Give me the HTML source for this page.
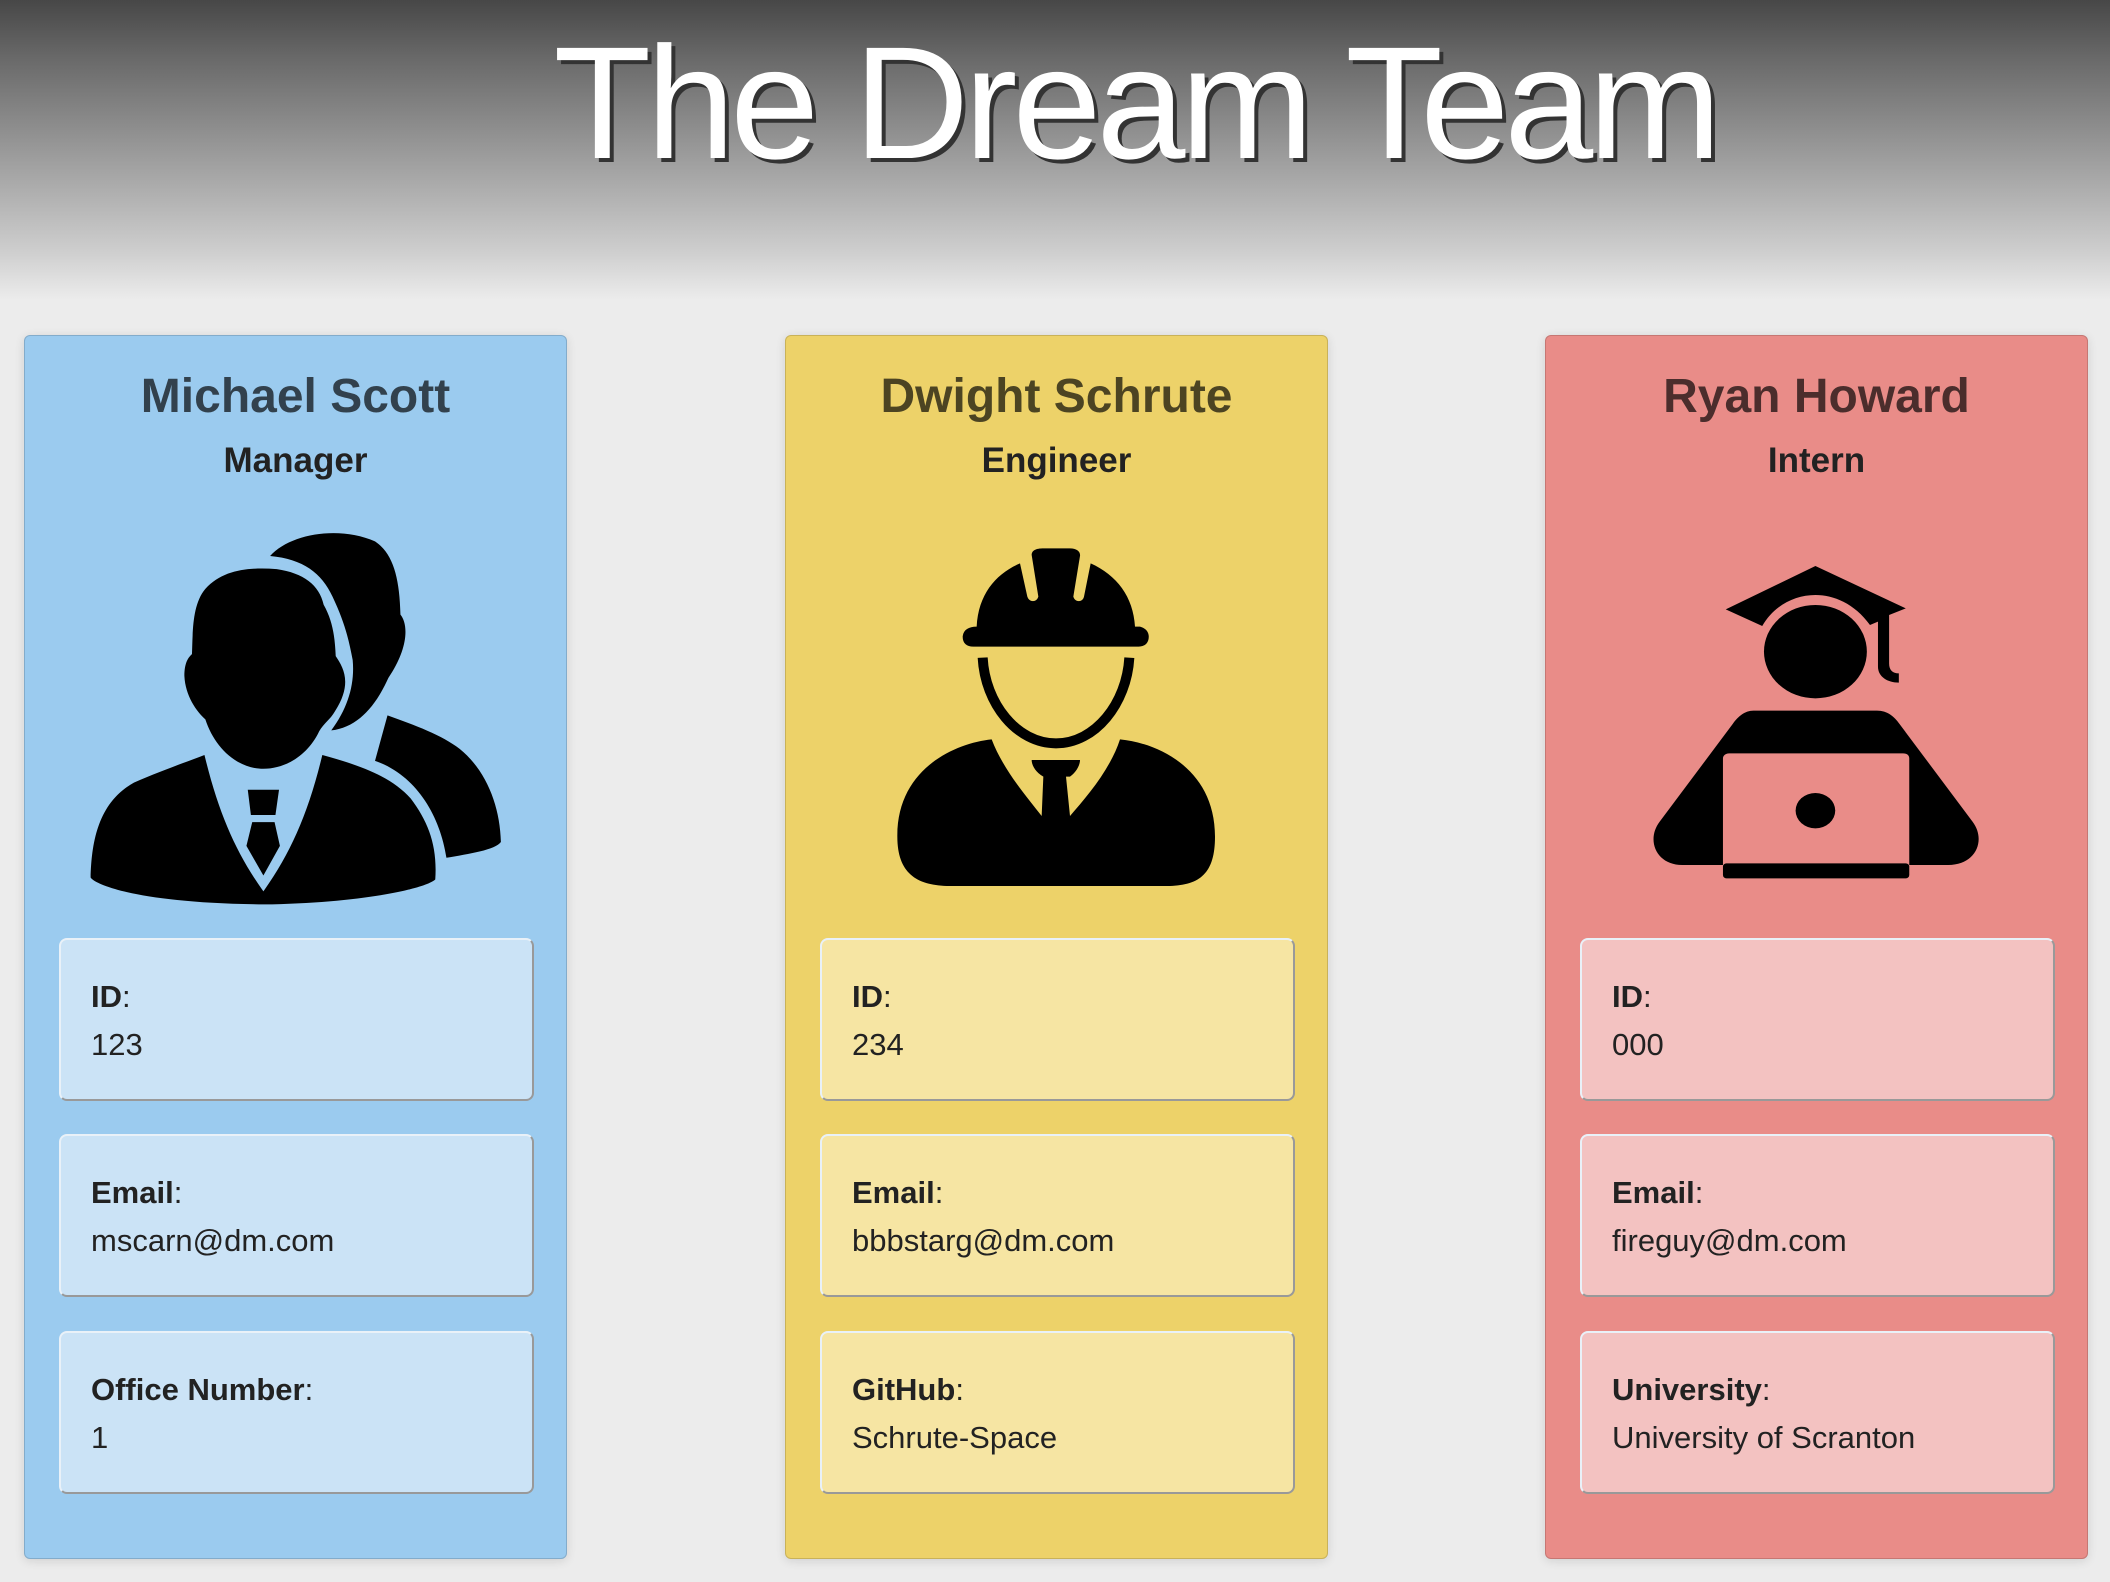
<!DOCTYPE html>
<html><head><meta charset="utf-8"><style>
*{margin:0;padding:0;box-sizing:border-box}
html,body{width:2110px;height:1582px;overflow:hidden;background:#ececec;font-family:"Liberation Sans",Arial,sans-serif}
.hdr{position:absolute;left:0;top:0;width:2110px;height:300px;background:linear-gradient(#474747 0px,#6a6a6a 60px,#9e9e9e 160px,#cdcdcd 250px,#ececec 300px)}
.title{position:absolute;left:0;width:2110px;top:11px;text-align:center;color:#fff;font-size:160px;letter-spacing:-5px;line-height:184px;text-shadow:4px 4px 0 #333;padding-left:160px}
.card{position:absolute;top:335px;width:543px;height:1224px;border-radius:6px;border:1px solid rgba(0,0,0,.15);box-shadow:0 2px 10px rgba(0,0,0,.12)}
.nm{position:absolute;left:0;width:100%;top:33px;text-align:center;font-size:48px;font-weight:bold;color:rgba(0,0,0,.68);line-height:56px}
.rl{position:absolute;left:0;width:100%;top:105px;text-align:center;font-size:35px;font-weight:bold;color:#222;line-height:40px}
.box{position:absolute;left:34px;width:475px;height:163px;border-radius:8px;border:2px solid;border-color:#e9f1f8 #999 #999 #e9f1f8;padding:33px 0 0 30px;font-size:31px;color:#222;line-height:48px}
.box b{font-weight:bold}
.b1{top:602px}.b2{top:798px}.b3{top:995px}
svg{position:absolute}
</style></head><body>
<div class="hdr"></div>
<div class="title">The Dream Team</div>

<div class="card" style="left:24px;background:#9bcbef">
<div class="nm">Michael Scott</div><div class="rl">Manager</div>
<div class="box b1" style="background:#cbe3f6"><b>ID</b>:<br>123</div>
<div class="box b2" style="background:#cbe3f6"><b>Email</b>:<br>mscarn@dm.com</div>
<div class="box b3" style="background:#cbe3f6"><b>Office Number</b>:<br>1</div>
</div>

<div class="card" style="left:785px;background:#edd269">
<div class="nm">Dwight Schrute</div><div class="rl">Engineer</div>
<div class="box b1" style="background:#f6e5a3"><b>ID</b>:<br>234</div>
<div class="box b2" style="background:#f6e5a3"><b>Email</b>:<br>bbbstarg@dm.com</div>
<div class="box b3" style="background:#f6e5a3"><b>GitHub</b>:<br>Schrute-Space</div>
</div>

<div class="card" style="left:1545px;background:#e98c88">
<div class="nm">Ryan Howard</div><div class="rl">Intern</div>
<div class="box b1" style="background:#f3c2c1"><b>ID</b>:<br>000</div>
<div class="box b2" style="background:#f3c2c1"><b>Email</b>:<br>fireguy@dm.com</div>
<div class="box b3" style="background:#f3c2c1"><b>University</b>:<br>University of Scranton</div>
</div>

<svg style="left:0;top:320px" width="700" height="620" viewBox="0 0 1568 1568" preserveAspectRatio="none">
<path fill="#000" d="M605,597 C650,540 760,520 840,560 C880,590 895,650 897,745 C915,770 915,830 870,905 C840,980 800,1030 742,1038 C780,980 795,920 790,860 C780,800 770,760 745,700 C720,640 680,605 605,597Z"/>
<path fill="#000" d="M868,1000 C930,1025 990,1050 1030,1085 C1090,1140 1120,1230 1122,1320 C1110,1340 1050,1350 1000,1360 C985,1250 930,1150 840,1115 Z"/>
<path fill="#000" d="M430,845 C432,790 430,720 460,680 C500,630 560,625 620,630 C680,640 715,670 725,720 C745,760 750,800 752,850 C770,880 790,920 750,990 C740,1010 725,1020 715,1040 C690,1100 640,1135 590,1135 C530,1135 480,1080 460,1010 C440,990 415,950 413,900 C413,870 420,855 430,845Z"/>
<path fill="#000" d="M458,1100 C400,1125 350,1145 300,1170 C220,1220 205,1320 203,1410 C210,1425 300,1475 590,1478 C800,1475 950,1440 975,1415 C980,1330 960,1270 920,1210 C880,1160 820,1130 722,1100 C690,1250 650,1350 590,1445 C530,1350 490,1250 458,1100Z"/>
<path fill="#000" d="M555,1188 L625,1188 L617,1252 L562,1252Z M565,1270 L615,1270 L627,1330 L590,1405 L552,1330Z"/>
</svg>

<svg style="left:870px;top:530px" width="375" height="375" viewBox="0 0 1125 1125">
<path fill="#000" d="M320,290 C325,190 380,130 450,100 L472,200 C478,218 500,218 505,200 L485,75 C485,60 500,55 520,55 L600,55 C620,55 632,65 630,78 L610,200 C615,218 638,218 642,200 L662,100 C740,135 790,200 795,290 L810,290 C830,295 840,310 835,330 C830,345 820,350 800,350 L310,350 C290,350 278,340 278,320 C280,300 295,290 320,290Z"/>
<path fill="none" stroke="#000" stroke-width="30" d="M338,383 C345,520 440,640 558,640 C676,640 770,520 778,383"/>
<path fill="#000" d="M365,628 C250,640 80,720 82,920 C82,1030 140,1065 230,1068 L900,1068 C990,1065 1035,1030 1035,920 C1035,720 870,640 750,628 C720,720 650,800 600,858 L588,740 L600,740 C620,725 630,705 630,690 L485,690 C485,705 495,725 520,740 L515,858 C470,800 400,720 365,628Z"/>
</svg>

<svg style="left:1545px;top:520px" width="545" height="400" viewBox="0 0 1568 1200" preserveAspectRatio="none">
<path fill="#000" d="M520,268 L778,138 L1038,265 L990,285 L990,430 C990,450 1000,460 1018,460 L1018,488 C985,488 958,470 958,440 L958,305 L935,315 C890,250 830,225 778,225 C720,225 660,255 625,318 Z"/>
<ellipse cx="778" cy="395" rx="148" ry="140" fill="#000"/>
<path fill="#000" d="M600,572 L955,572 C985,572 1005,590 1020,612 L1230,905 C1270,960 1240,1035 1160,1035 L1048,1035 L1048,715 C1048,705 1040,700 1030,700 L530,700 C518,700 512,708 512,715 L512,1035 L395,1035 C320,1035 290,960 330,905 L540,612 C555,590 575,572 600,572Z"/>
<rect x="512" y="1030" width="536" height="45" rx="10" fill="#000"/>
<ellipse cx="778" cy="872" rx="57" ry="53" fill="#000"/>
</svg>
</body></html>
